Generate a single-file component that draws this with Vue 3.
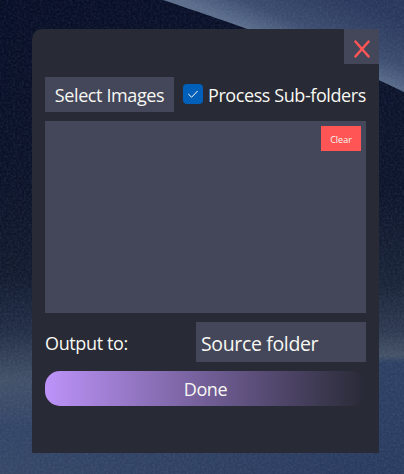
<script setup>
import { ref } from 'vue'

const subFolders = ref(true)
</script>

<template>
  <div class="desktop">
    <svg class="wallpaper" viewBox="0 0 404 474" preserveAspectRatio="none" aria-hidden="true">
      <defs>
        <linearGradient id="left" x1="0" y1="0" x2="0" y2="1">
          <stop offset="0" stop-color="#070e26" />
          <stop offset="0.35" stop-color="#0a1228" />
          <stop offset="0.58" stop-color="#121a2e" />
          <stop offset="0.7" stop-color="#222e46" />
          <stop offset="0.8" stop-color="#435168" />
          <stop offset="0.84" stop-color="#3e4e69" />
          <stop offset="0.9" stop-color="#334567" />
          <stop offset="1" stop-color="#364866" />
        </linearGradient>
        <linearGradient id="right" x1="0" y1="0" x2="0" y2="1">
          <stop offset="0" stop-color="#0a112a" />
          <stop offset="0.4" stop-color="#0c142a" />
          <stop offset="0.6" stop-color="#1a2438" />
          <stop offset="0.7" stop-color="#2e3a50" />
          <stop offset="0.75" stop-color="#445266" />
          <stop offset="0.765" stop-color="#2d4063" />
          <stop offset="1" stop-color="#2a3b60" />
        </linearGradient>
        <linearGradient id="blend" x1="0" y1="0" x2="1" y2="0">
          <stop offset="0" stop-color="#000" />
          <stop offset="0.85" stop-color="#fff" />
        </linearGradient>
        <mask id="fade">
          <rect width="404" height="474" fill="url(#blend)" />
        </mask>
        <linearGradient id="ridge" gradientUnits="userSpaceOnUse" x1="272" y1="38" x2="298" y2="-25">
          <stop offset="0" stop-color="#5b6d8b" />
          <stop offset="0.35" stop-color="#3b4c6f" />
          <stop offset="1" stop-color="#28375b" />
        </linearGradient>
        <filter id="grain" x="0" y="0" width="100%" height="100%">
          <feTurbulence type="fractalNoise" baseFrequency="0.45" numOctaves="2" seed="4" />
          <feColorMatrix values="0 0 0 0 0.4  0 0 0 0 0.48  0 0 0 0 0.68  0.9 0 0 0 -0.3" />
        </filter>
      </defs>
      <rect width="404" height="474" fill="url(#left)" />
      <rect width="404" height="474" fill="url(#right)" mask="url(#fade)" />
      <path d="M163 0C205 14 230 23 262 34C310 51 360 70 404 92V0Z" fill="url(#ridge)" />
      <rect width="404" height="474" filter="url(#grain)" opacity="0.22" />
    </svg>

    <main class="panel">
      <header class="titlebar">
        <button class="close" type="button" aria-label="Close">
          <svg viewBox="0 0 16 18" width="16" height="18">
            <path d="M0.8 0.8L15.2 17.2M15.2 0.8L0.8 17.2" />
          </svg>
        </button>
      </header>

      <section class="content">
        <div class="row">
          <button class="select" type="button"><span>Select Images</span></button>
          <label class="check">
            <input v-model="subFolders" type="checkbox" />
            <span class="box">
              <svg v-if="subFolders" viewBox="0 0 12 10" width="12" height="10">
                <path d="M1.3 5L4.6 8.2L10.6 2" />
              </svg>
            </span>
            <span class="check-text">Process Sub-folders</span>
          </label>
        </div>

        <div class="files">
          <button class="clear" type="button"><span>Clear</span></button>
        </div>

        <div class="row output">
          <span class="output-label">Output to:</span>
          <div class="source"><span>Source folder</span></div>
        </div>

        <button class="done" type="button"><span>Done</span></button>
      </section>
    </main>
  </div>
</template>

<style>
body {
  margin: 0;
}
</style>

<style scoped>
.desktop {
  position: relative;
  box-sizing: border-box;
  width: 404px;
  height: 474px;
  padding: 29px 25px 21px 32px;
  overflow: hidden;
  font-family: "Open Sans", "Noto Sans", sans-serif;
  font-size: 18px;
  color: #f8f8f2;
}
.wallpaper {
  position: absolute;
  inset: 0;
  width: 100%;
  height: 100%;
}
.panel {
  position: relative;
  height: 424px;
  background: #282a36;
  border-top-left-radius: 10px;
}
button {
  display: flex;
  align-items: center;
  justify-content: center;
  box-sizing: border-box;
  padding: 0;
  border: 0;
  font: inherit;
  color: inherit;
  white-space: nowrap;
}
.titlebar {
  display: flex;
  justify-content: flex-end;
  height: 48px;
}
.close {
  width: 35px;
  height: 35px;
  padding-top: 5px;
  background: #44475a;
}
.close path {
  fill: none;
  stroke: #ff5555;
  stroke-width: 2.3;
}
.content {
  display: flex;
  flex-direction: column;
  gap: 9px;
  padding: 0 13px;
}
.row {
  display: flex;
  justify-content: space-between;
}
.select {
  width: 129px;
  height: 35px;
  padding-top: 1px;
  background: #44475a;
  letter-spacing: -0.4px;
}
.check {
  display: flex;
  align-items: center;
  width: 183px;
  height: 34px;
  white-space: nowrap;
}
.check input {
  position: absolute;
  opacity: 0;
}
.box {
  display: flex;
  flex: none;
  align-items: center;
  justify-content: center;
  width: 20px;
  height: 20px;
  margin-right: 5px;
  border-radius: 4px;
  background: #005fb8;
}
.box path {
  fill: none;
  stroke: #fff;
  stroke-width: 1;
}
.check-text {
  padding-top: 2px;
  letter-spacing: -0.42px;
}
.files {
  display: flex;
  justify-content: flex-end;
  box-sizing: border-box;
  height: 192px;
  padding: 5px;
  background: #44475a;
}
.clear {
  width: 40px;
  height: 25px;
  padding-top: 2px;
  background: #ff5555;
  font-size: 9px;
}
.output {
  align-items: center;
  white-space: nowrap;
}
.output-label {
  padding-top: 1px;
  letter-spacing: -0.37px;
}
.source {
  display: flex;
  align-items: center;
  box-sizing: border-box;
  width: 170px;
  height: 40px;
  padding: 3px 5px 0;
  background: #44475a;
  font-size: 19.5px;
  letter-spacing: -0.35px;
}
.done {
  height: 35px;
  padding-top: 0;
  border-radius: 15px;
  background: linear-gradient(90deg, #bd93f9, #282a36);
  letter-spacing: -0.4px;
}
</style>
